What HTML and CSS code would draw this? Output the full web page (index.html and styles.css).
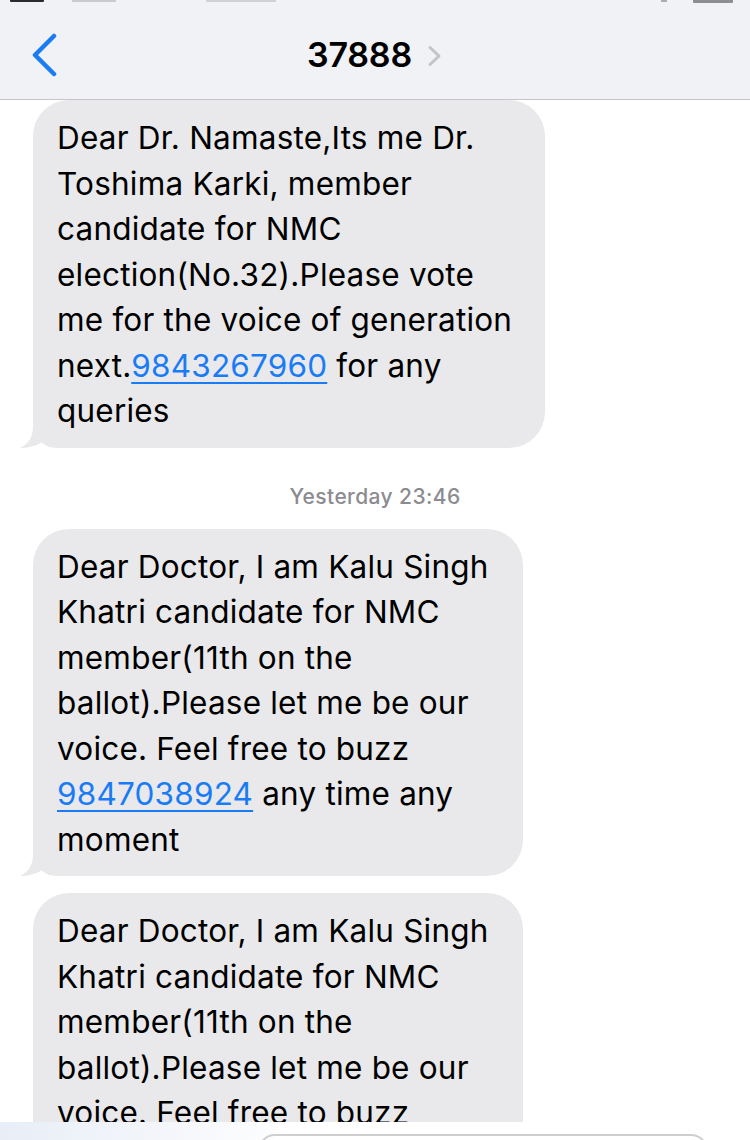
FILE: index.html
```html
<!DOCTYPE html>
<html lang="en">
<head>
<meta charset="utf-8">
<title>37888</title>
<link rel="stylesheet" href="styles.css">
</head>
<body>
<div class="screen">
  <header class="header">
    <div class="status">
      <span class="st st-signal"></span>
      <span class="st st-carrier"></span>
      <span class="st st-time"></span>
      <span class="st-spacer"></span>
      <span class="st st-pct"></span>
      <span class="st st-battery"></span>
    </div>
    <nav class="nav">
      <div class="nav-left">
        <svg class="back" width="28" height="44" viewBox="0 0 28 44" aria-hidden="true">
          <polyline points="23,3 4,22 23,41" fill="none" stroke="#1a7cf5" stroke-width="4.5" stroke-linecap="round" stroke-linejoin="round"/>
        </svg>
      </div>
      <div class="nav-title">
        <span class="title">37888</span>
        <svg class="title-chev" width="16" height="24" viewBox="0 0 16 24" aria-hidden="true">
          <polyline points="3,3.5 12,12 3,20.5" fill="none" stroke="#c4c4c7" stroke-width="3" stroke-linecap="round" stroke-linejoin="round"/>
        </svg>
      </div>
      <div class="nav-right"></div>
    </nav>
  </header>

  <main class="messages">
    <div class="bubble bubble-wide">
      <svg class="tail" width="32" height="36" viewBox="0 0 32 36" aria-hidden="true">
        <path d="M13,0 L13,14 C13,26 8,32 0,36 C8,36 16,34 22,30 C25,33 28,35 32,35.6 L32,0 Z" fill="#e9e9eb"/>
      </svg>
      <span class="text">Dear Dr. Namaste,Its me Dr.<br>
      Toshima Karki, member<br>
      candidate for NMC<br>
      election(No.32).Please vote<br>
      me for the voice of generation<br>
      next.<a class="link" href="#">9843267960</a> for any<br>
      queries</span>
    </div>

    <div class="stamp">Yesterday 23:46</div>

    <div class="bubble bubble-mid">
      <svg class="tail" width="32" height="36" viewBox="0 0 32 36" aria-hidden="true">
        <path d="M13,0 L13,14 C13,26 8,32 0,36 C8,36 16,34 22,30 C25,33 28,35 32,35.6 L32,0 Z" fill="#e9e9eb"/>
      </svg>
      <span class="text">Dear Doctor, I am Kalu Singh<br>
      Khatri candidate for NMC<br>
      member(11th on the<br>
      ballot).Please let me be our<br>
      voice. Feel free to buzz<br>
      <a class="link" href="#">9847038924</a> any time any<br>
      moment</span>
    </div>

    <div class="bubble bubble-mid bubble-next">
      <span class="text">Dear Doctor, I am Kalu Singh<br>
      Khatri candidate for NMC<br>
      member(11th on the<br>
      ballot).Please let me be our<br>
      voice. Feel free to buzz<br>
      <a class="link" href="#">9847038924</a> any time any<br>
      moment</span>
    </div>
  </main>

  <footer class="compose">
    <div class="input"></div>
  </footer>
</div>
</body>
</html>
```

FILE: styles.css
```css
html, body {
  margin: 0;
  padding: 0;
  background: #ffffff;
}

.screen {
  width: 750px;
  height: 1140px;
  overflow: hidden;
  display: flex;
  flex-direction: column;
  font-family: "Inter", "Liberation Sans", sans-serif;
  color: #000;
}

/* ---------- header ---------- */
.header {
  flex: none;
  height: 99px;
  background: #f1f2f5;
  border-bottom: 1px solid #c6c6c9;
  display: flex;
  flex-direction: column;
}

.status {
  height: 3px;
  display: flex;
  align-items: flex-start;
  overflow: hidden;
}

.st {
  display: block;
  height: 2px;
  border-radius: 0 0 1px 1px;
}

.st-signal { width: 34px; margin-left: 10px; background: #2b2b2d; }
.st-carrier { width: 44px; margin-left: 28px; background: #c9cacd; }
.st-time { width: 70px; margin-left: 90px; background: #d0d1d4; }
.st-spacer { flex: 1; }
.st-pct { width: 6px; margin-right: 26px; background: #a9aaad; }
.st-battery { width: 40px; margin-right: 17px; height: 3px; background: #8d8e91; }

.nav {
  flex: 1;
  padding-top: 8px;
  display: grid;
  grid-template-columns: 1fr auto 1fr;
  align-items: center;
}

.nav-left {
  padding-left: 31px;
  display: flex;
  align-items: center;
}

.back { display: block; }

.nav-title {
  display: flex;
  align-items: center;
}

.title {
  font-size: 34px;
  font-weight: 600;
  letter-spacing: -0.2px;
  line-height: 40px;
}

.title-chev {
  display: block;
  margin-left: 15px;
  margin-top: 2px;
}

/* ---------- messages ---------- */
.messages {
  flex: 1;
  overflow: hidden;
  padding: 0 0 0 33px;
  display: flex;
  flex-direction: column;
  align-items: flex-start;
}

.bubble {
  position: relative;
  box-sizing: border-box;
  background: #e9e9eb;
  border-radius: 36px;
  border-bottom-left-radius: 24px;
  padding: 15px 10px 14px 24px;
  font-size: 31.5px;
  line-height: 45.5px;
  letter-spacing: 0.2px;
  white-space: nowrap;
}

.bubble-wide { width: 512px; }
.bubble-mid { width: 490px; }

.bubble-next {
  margin-top: 17px;
  border-bottom-left-radius: 36px;
}

.text {
  position: relative;
}

.tail {
  position: absolute;
  left: -13px;
  bottom: 0;
  display: block;
}

.link {
  color: #1a7cf5;
  text-decoration: underline;
  text-decoration-thickness: 2px;
  text-underline-offset: 5px;
}

.stamp {
  align-self: center;
  margin: 37px 0 20px -33px;
  font-size: 21px;
  line-height: 24px;
  font-weight: 500;
  color: #8b8b90;
  letter-spacing: 0.4px;
}

/* ---------- compose ---------- */
.compose {
  flex: none;
  height: 18px;
  overflow: hidden;
  box-sizing: border-box;
  padding: 12px 0 0 258px;
  background: linear-gradient(90deg, #e8eef7 0%, #f3f5fa 20%, #ffffff 40%);
}

.input {
  width: 450px;
  height: 34px;
  box-sizing: border-box;
  border: 2px solid #cfcfd2;
  border-radius: 18px;
  background: #ffffff;
}
```
